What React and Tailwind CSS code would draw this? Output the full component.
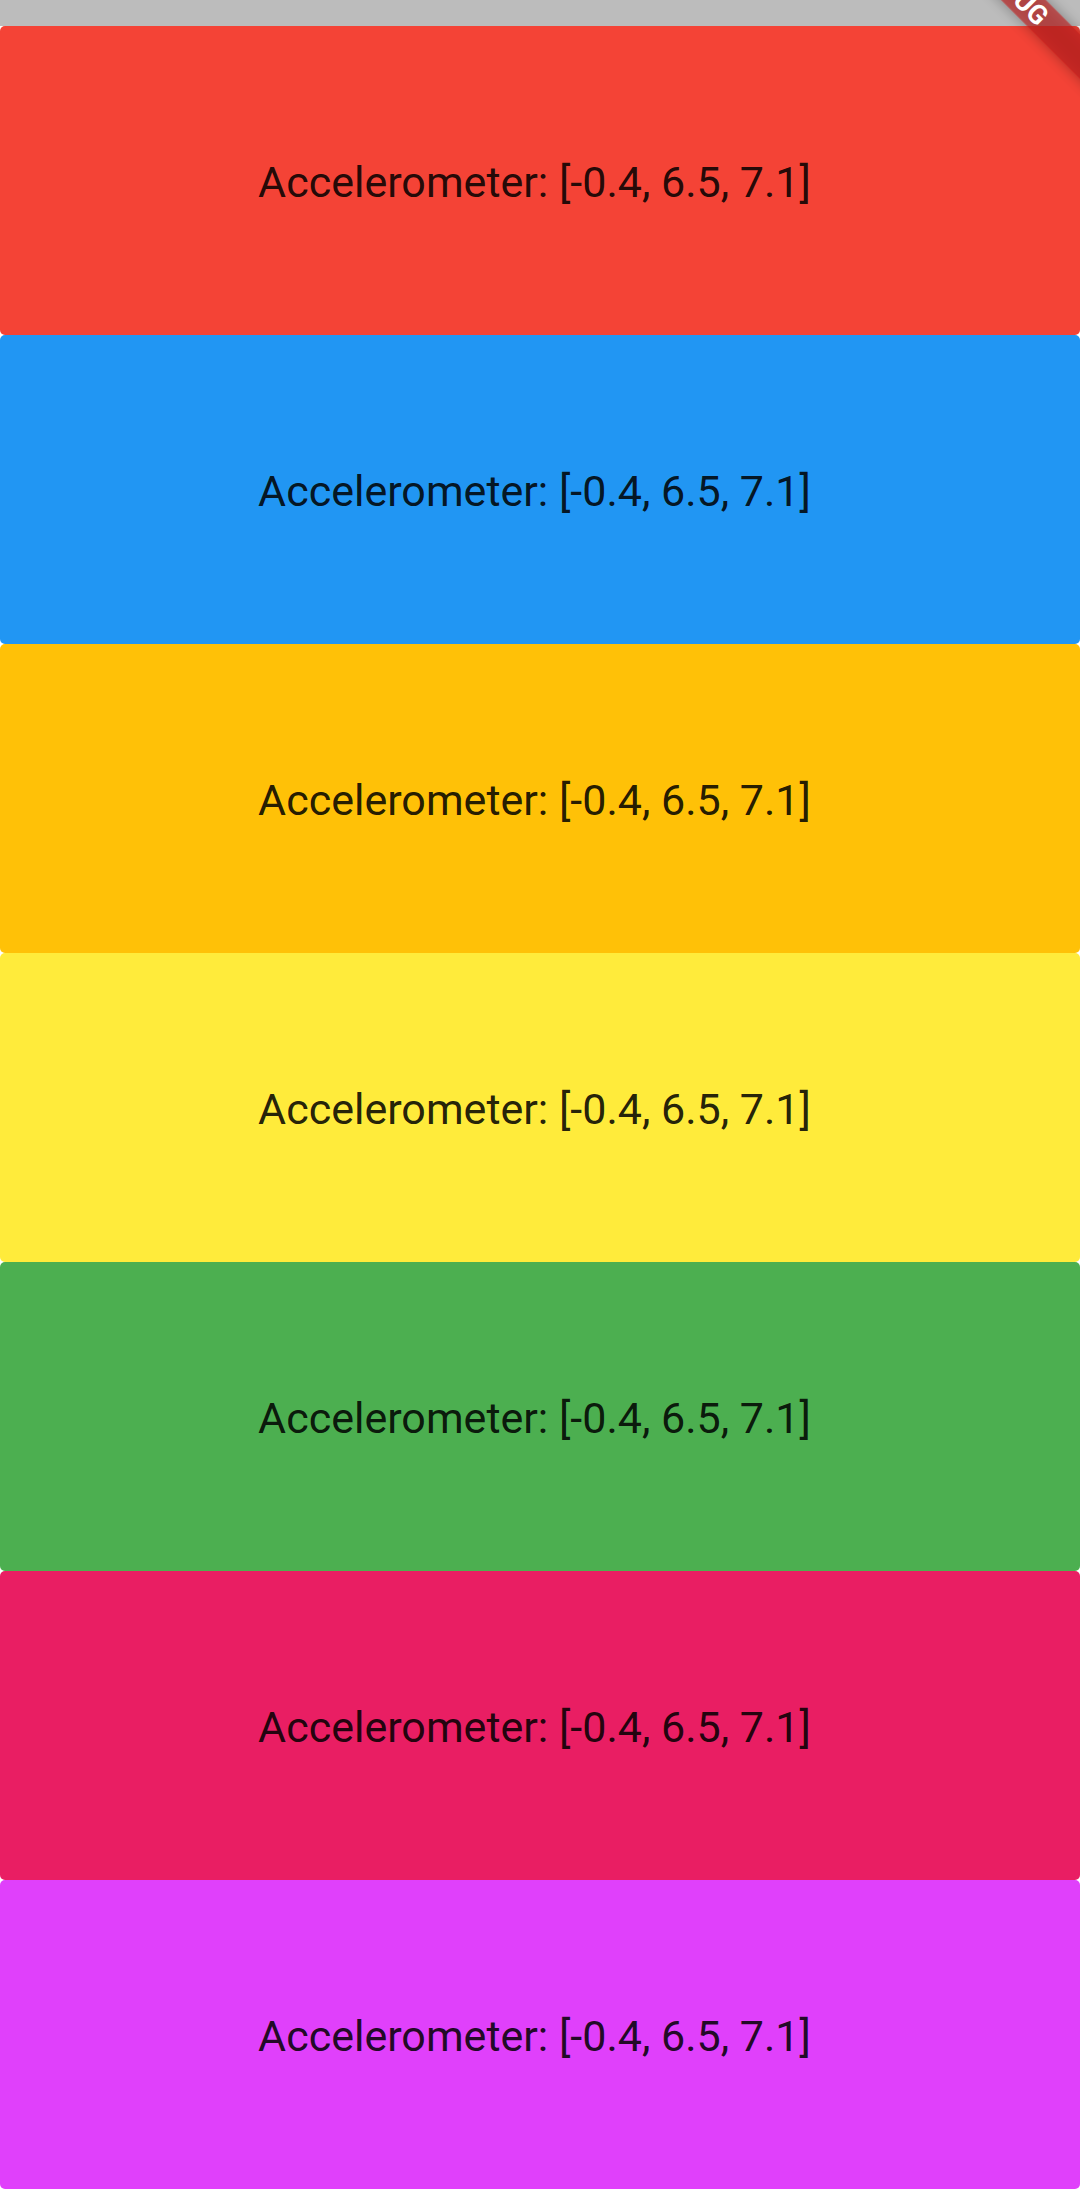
const colors = [
  'bg-[#f44336]',
  'bg-[#2196f3]',
  'bg-[#ffc107]',
  'bg-[#ffeb3b]',
  'bg-[#4caf50]',
  'bg-[#e91e63]',
  'bg-[#e040fb]',
];

function DebugBanner() {
  return (
    <svg className="absolute top-0 right-0 pointer-events-none" width="200" height="200" viewBox="0 0 200 200">
      <defs>
        <filter id="bannerShadow" x="-50%" y="-50%" width="200%" height="200%">
          <feGaussianBlur in="SourceAlpha" stdDeviation="7" />
          <feComponentTransfer>
            <feFuncA type="linear" slope="0.5" />
          </feComponentTransfer>
          <feMerge>
            <feMergeNode />
            <feMergeNode in="SourceGraphic" />
          </feMerge>
        </filter>
      </defs>
      <g transform="translate(200,0) rotate(45)">
        <rect x="-160" y="24.25" width="320" height="31.5" fill="rgba(183,28,28,0.63)" filter="url(#bannerShadow)" />
        <text
          x="-54"
          y="49.5"
          textAnchor="middle"
          fill="#ffffff"
          fontFamily="Roboto, sans-serif"
          fontWeight="700"
          fontSize="27"
        >
          DEBUG
        </text>
      </g>
    </svg>
  );
}

export default function App() {
  return (
    <div className="relative w-[1080px] h-[2189px] bg-white overflow-hidden font-['Roboto',sans-serif]">
      <div className="h-[26px] bg-[#bcbcbc]" />
      {colors.map((c, i) => (
        <div key={i} className={`${c} h-[309px] rounded-[5px] flex items-center justify-center pr-[11px]`}>
          <span className="text-[43px] text-black/[0.87] pt-[4px]">Accelerometer: [-0.4, 6.5, 7.1]</span>
        </div>
      ))}
      <DebugBanner />
    </div>
  );
}
